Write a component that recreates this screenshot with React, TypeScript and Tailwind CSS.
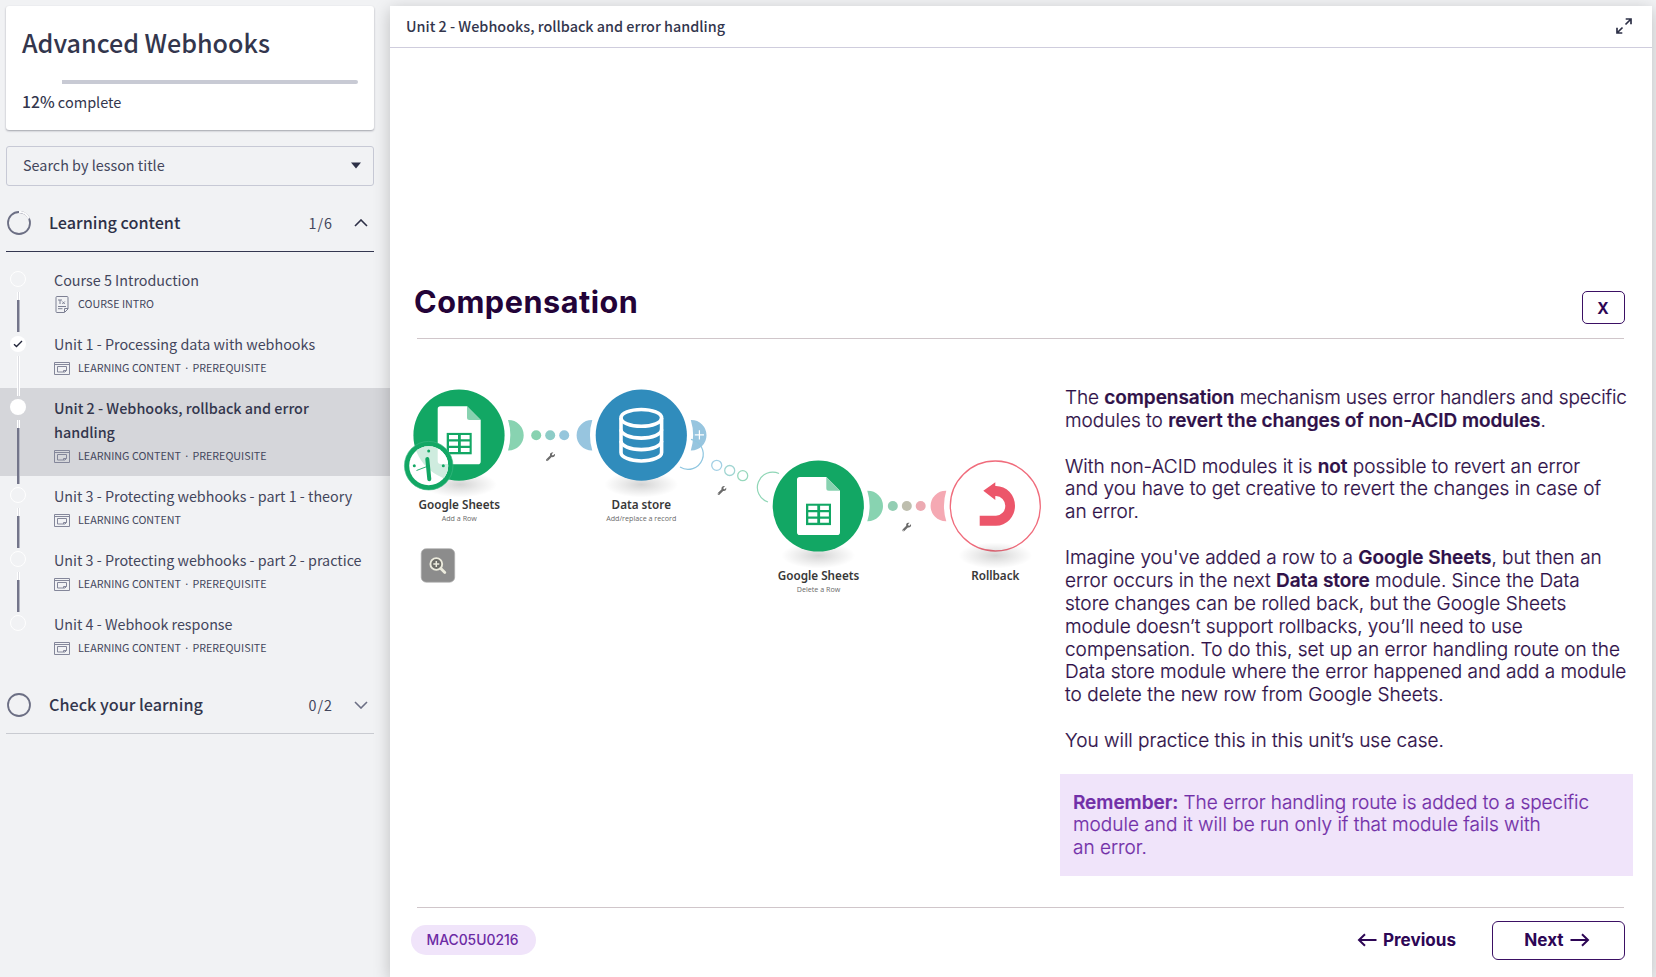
import type { ReactNode } from "react";
import { FaWrench } from "react-icons/fa";

type Lesson = {
  title: ReactNode;
  meta: string[];
  kind: "text" | "content";
  state: "open" | "done" | "active";
  line: "partial" | "white" | "none";
};

const lessons: Lesson[] = [
  { title: "Course 5 Introduction", meta: ["COURSE INTRO"], kind: "text", state: "open", line: "partial" },
  { title: "Unit 1 - Processing data with webhooks", meta: ["LEARNING CONTENT", "PREREQUISITE"], kind: "content", state: "done", line: "white" },
  {
    title: (
      <>
        Unit 2 - Webhooks, rollback and error
        <br />
        handling
      </>
    ),
    meta: ["LEARNING CONTENT", "PREREQUISITE"],
    kind: "content",
    state: "active",
    line: "partial",
  },
  { title: "Unit 3 - Protecting webhooks - part 1 - theory", meta: ["LEARNING CONTENT"], kind: "content", state: "open", line: "partial" },
  { title: "Unit 3 - Protecting webhooks - part 2 - practice", meta: ["LEARNING CONTENT", "PREREQUISITE"], kind: "content", state: "open", line: "partial" },
  { title: "Unit 4 - Webhook response", meta: ["LEARNING CONTENT", "PREREQUISITE"], kind: "content", state: "open", line: "none" },
];

function TextIcon() {
  return (
    <svg className="ml-px" width="14" height="17" viewBox="0 0 14 17" fill="none" stroke="#7d8093" strokeWidth="1">
      <path d="M2 .5h10a1 1 0 0 1 1 1v11.500l-3.500 3.500H2a1 1 0 0 1-1-1v-14a1 1 0 0 1 1-1zM9.500 16v-3.500H13" />
      <path d="M3 4h4M5 4v4M7.300 5.500l2.500 2.500M9.800 5.500L7.300 8M3 10.500h8M3 12.700h4.500" />
    </svg>
  );
}

function ContentIcon() {
  return (
    <svg width="16" height="13" viewBox="0 0 16 13" fill="none" stroke="#84879a" strokeWidth="1">
      <path d="M.5 .5h15v12H.5zM.5 2.500h15" />
      <path d="M3.500 4.500h9v4l-1.500 1.500H3.500zM9.500 10V8.500h3" />
    </svg>
  );
}

function Marker({ state }: { state: Lesson["state"] }) {
  if (state === "open") return <span className="size-4 rounded-full border border-white" />;
  return (
    <span className="flex size-4 items-center justify-center rounded-full bg-white">
      {state === "done" && (
        <svg width="10" height="8" viewBox="0 0 10 8" fill="none" stroke="#23263a" strokeWidth="1.400">
          <path d="M1 4.200l2.500 2.300L9 1" />
        </svg>
      )}
    </span>
  );
}

function LessonRow({ lesson }: { lesson: Lesson }) {
  const active = lesson.state === "active";
  const done = lesson.state === "done";
  return (
    <li className={active ? "relative flex bg-[#d5d6da] pt-2 pb-[10px]" : "relative flex pt-2 pb-[10px]"}>
      <div className={done ? "flex w-[54px] shrink-0 pt-[4px] pl-[10px]" : "flex w-[54px] shrink-0 pt-[3px] pl-[10px]"}>
        <Marker state={lesson.state} />
      </div>
      {lesson.line !== "none" && (
        <div className="absolute top-8 -bottom-2 left-[17px] z-10 flex w-[3px] flex-col">
          <span className={lesson.line === "white" ? "grow border-x border-white bg-[#dcdde2]" : "h-2 border-x border-white bg-[#dcdde2]"} />
          {lesson.line === "partial" && <span className="grow border-r border-[#b4b6c2] bg-[#73758a]" />}
        </div>
      )}
      <div className="text-[#43465c]">
        <div className={active ? "text-[14.380px] leading-6 font-medium whitespace-nowrap text-[#33364d]" : "text-[14.340px] leading-6 whitespace-nowrap"}>
          {lesson.title}
        </div>
        <div className="mt-[2px] flex h-5 items-center text-[10.720px] leading-5 whitespace-nowrap">
          <span className="flex w-6 items-center">{lesson.kind === "text" ? <TextIcon /> : <ContentIcon />}</span>
          {lesson.meta.map((m, i) => (
            <span key={m} className="whitespace-pre">
              {i > 0 && <span className="px-[2.700px]">·</span>}
              {m}
            </span>
          ))}
        </div>
      </div>
    </li>
  );
}

function SectionHeader({ label, count, open }: { label: string; count: string; open: boolean }) {
  return (
    <div
      className={
        open
          ? "mr-4 ml-[6px] flex h-[57px] items-center border-b border-[#343750] text-[#2d3047]"
          : "mr-4 ml-[6px] flex h-[57px] items-center border-b border-[#c9cbd1] text-[#33364d]"
      }
    >
      <svg className="ml-px" width="24" height="24" viewBox="0 0 24 24" fill="none">
        <circle cx="12" cy="12" r="11" stroke="#6c6f84" strokeWidth="1.800" />
        {open && <path d="M12 1a11 11 0 0 1 10 6.500" stroke="#fafafb" strokeWidth="2.200" />}
      </svg>
      <span className="ml-[18px] grow pb-[2px] text-[16.200px] leading-6 font-medium">{label}</span>
      <span className="mr-[21px] text-[14.290px] leading-6 tracking-[1px] text-[#43465c]">{count}</span>
      <svg className="mr-[6px]" width="14" height="8" viewBox="0 0 14 8" fill="none" stroke={open ? "#2d3047" : "#6c6f84"} strokeWidth="1.600">
        <path d={open ? "M1 7l6-6 6 6" : "M1 1l6 6 6-6"} />
      </svg>
    </div>
  );
}

function Sidebar() {
  return (
    <aside className="flex w-[390px] shrink-0 flex-col pt-[6px] font-['Noto_Sans_CJK_JP',sans-serif]">
      <div className="mr-4 ml-[6px] h-[124px] rounded-[3px] bg-white px-4 pt-[18px] shadow-[0_1px_2px_rgba(40,42,60,0.400)]">
        <h1 className="text-[25.100px] leading-9 font-medium whitespace-nowrap text-[#33364d]">Advanced Webhooks</h1>
        <div className="mt-5 flex h-1 rounded-full">
          <span className="w-10 bg-white" />
          <span className="grow rounded-r-[2px] bg-[#c8cad4]" />
        </div>
        <p className="mt-[6px] text-[14.500px] leading-6 text-[#33364d]">
          <span className="text-[15.700px] font-medium">12%</span> complete
        </p>
      </div>
      <div className="mt-4 mr-4 ml-[6px] flex h-10 items-center justify-between rounded-[3px] border border-[#c7c9d5] pr-[12px] pb-[2px] pl-4 text-[#43465c]">
        <span className="text-[14.380px] leading-6">Search by lesson title</span>
        <svg width="10" height="7" viewBox="0 0 10 7" fill="#2d3047">
          <path d="M0 .5h10L5 6.500z" />
        </svg>
      </div>
      <div className="mt-[9px]">
        <SectionHeader label="Learning content" count="1/6" open />
        <ul className="flex flex-col pt-2 pb-[9px]">
          {lessons.map((l, i) => (
            <LessonRow key={i} lesson={l} />
          ))}
        </ul>
        <SectionHeader label="Check your learning" count="0/2" open={false} />
      </div>
    </aside>
  );
}

function SheetNode({ x, y }: { x: number; y: number }) {
  return (
    <g transform={`translate(${x} ${y})`}>
      <circle r="45.600" fill="#12a764" />
      <path d="M-18.500-29H8L21.700-15.300V26.200a2.800 2.800 0 0 1-2.800 2.800h-37.400a2.800 2.800 0 0 1-2.800-2.800v-52.400a2.800 2.800 0 0 1 2.800-2.800z" fill="#fff" />
      <path d="M8-29L21.700-15.300H10.500A2.500 2.500 0 0 1 8-17.800z" fill="#87d2b0" />
      <rect x="-12.300" y="-2.300" width="25" height="21.400" fill="#12a764" />
      <path d="M-10-.2h9v4.200h-9zM1.800-.2h8.800v4.200H1.800zM-10 6.300h9v4.200h-9zM1.800 6.300h8.800v4.200H1.800zM-10 12.700h9v4h-9zM1.800 12.700h8.800v4H1.800z" fill="#fff" />
    </g>
  );
}

function Port({ x, y, side, color }: { x: number; y: number; side: "left" | "right"; color: string }) {
  return (
    <path
      transform={`translate(${x} ${y})${side === "left" ? " scale(-1 1)" : ""}`}
      d="M49-15.200H49.500A15.200 15.200 0 0 1 49.500 15.200H49A51.300 51.300 0 0 0 49-15.200z"
      fill={color}
    />
  );
}

function NodeLabel({ x, y, title, sub }: { x: number; y: number; title: string; sub?: string }) {
  return (
    <g textAnchor="middle" className="font-['Noto_Sans',sans-serif]">
      <text x={x} y={y} className="fill-[#383838] text-[11.700px] font-semibold">
        {title}
      </text>
      {sub && (
        <text x={x} y={y + 12.500} className="fill-[#6a6a6a] font-['Open_Sans',sans-serif] text-[7.170px]">
          {sub}
        </text>
      )}
    </g>
  );
}

function Scenario() {
  return (
    <svg className="block" width="650" height="220" viewBox="400 380 650 220" fill="none">
      <defs>
        <radialGradient id="floor">
          <stop offset="0" stopColor="#000" stopOpacity="0.170" />
          <stop offset="0.500" stopColor="#000" stopOpacity="0.080" />
          <stop offset="1" stopColor="#000" stopOpacity="0" />
        </radialGradient>
      </defs>
      <ellipse cx="460" cy="484.500" rx="37" ry="13" fill="url(#floor)" />
      <ellipse cx="641.300" cy="484.500" rx="37" ry="13" fill="url(#floor)" />
      <ellipse cx="818.300" cy="555.500" rx="37" ry="13" fill="url(#floor)" />

      <SheetNode x={459} y={435.200} />
      <Port x={459} y={435.200} side="right" color="#88d3b1" />
      <circle cx="428.700" cy="465.700" r="24.300" fill="#12a764" />
      <circle cx="428.700" cy="465.700" r="24.300" stroke="#3fb984" strokeWidth="0.600" />
      <clipPath id="dial">
        <circle cx="428.700" cy="465.700" r="19.500" />
      </clipPath>
      <g clipPath="url(#dial)">
        <rect x="404" y="441" width="50" height="50" fill="#fff" />
        <circle cx="459" cy="435" r="45.600" fill="#cfecdf" />
        <rect x="437.700" y="406" width="43" height="58" rx="3" fill="#fff" />
      </g>
      <path d="M427.300 459l2 20.300" stroke="#12a764" strokeWidth="4" strokeLinecap="round" />
      <path d="M427.500 466.300l-11 4.200" stroke="#12a764" strokeWidth="0.900" />
      <g fill="#12a764">
        <circle cx="428.700" cy="451" r="1.500" />
        <circle cx="414.300" cy="465.700" r="1.500" />
        <circle cx="443.300" cy="465.700" r="1.500" />
      </g>

      <circle cx="536.200" cy="435.200" r="5" fill="#88d2b0" />
      <circle cx="550.200" cy="435.200" r="5" fill="#8dccc7" />
      <circle cx="564.200" cy="435.200" r="5" fill="#95c6dc" />

      <circle cx="641.300" cy="435.200" r="45.600" fill="#308cbc" />
      <Port x={641.300} y={435.200} side="left" color="#97c5df" />
      <Port x={641.800} y={435.200} side="right" color="#97c5df" />
      <path d="M694.800 434.800h9.200M699.400 430.200v9.200" stroke="#fff" strokeWidth="1.200" />
      <path d="M691 439.300a15.200 15.200 0 1 1-11 27.800" stroke="#8fc6e0" strokeWidth="1.200" />
      <g stroke="#fff" strokeWidth="3.600">
        <ellipse cx="641.300" cy="417.900" rx="20.300" ry="8.400" />
        <path d="M621 417.900v34.500c0 4.700 9 8.600 20.300 8.600s20.300-3.900 20.300-8.600v-34.500" />
        <path d="M621 429.500c0 4.700 9 8.600 20.300 8.600s20.300-3.900 20.300-8.600M621 441c0 4.700 9 8.600 20.300 8.600s20.300-3.900 20.300-8.600" />
      </g>

      <circle cx="716.700" cy="465.300" r="5" stroke="#a3d0e5" strokeWidth="1.300" />
      <circle cx="729.700" cy="470.500" r="5" stroke="#a0d5d2" strokeWidth="1.300" />
      <circle cx="742.700" cy="475.700" r="5" stroke="#98d8bd" strokeWidth="1.300" />
      <path d="M779 473.500a15.300 15.300 0 1 0-11 28.500" stroke="#8fd6b6" strokeWidth="1.200" />

      <SheetNode x={818.300} y={506} />
      <Port x={818.300} y={506} side="right" color="#88d3b1" />
      <circle cx="892.800" cy="506" r="5" fill="#93ceb3" />
      <circle cx="906.800" cy="506" r="5" fill="#bebeae" />
      <circle cx="920.700" cy="506" r="5" fill="#ecaab2" />
      <Port x={995.300} y={506} side="left" color="#f5a9b3" />
      <circle cx="995.300" cy="506" r="45" fill="#fff" stroke="#f06c7c" strokeWidth="1.300" />
      <ellipse cx="995.300" cy="555.500" rx="37" ry="13" fill="url(#floor)" />
      <path
        d="M983.300 490.700L995.300 482.300V486H996A19 19.850 0 0 1 996 525.700H979.700V515.700H996A9.300 9.850 0 0 0 996 496H995.300V500z"
        fill="#ec566a"
      />

      <FaWrench x={546} y={452.200} size={9} color="#6b6b6b" />
      <FaWrench x={717.500} y={486} size={9} color="#6b6b6b" />
      <FaWrench x={902.200} y={522.500} size={9} color="#6b6b6b" />

      <NodeLabel x={459.300} y={508.700} title="Google Sheets" sub="Add a Row" />
      <NodeLabel x={641.300} y={508.700} title="Data store" sub="Add/replace a record" />
      <NodeLabel x={818.500} y={579.500} title="Google Sheets" sub="Delete a Row" />
      <NodeLabel x={995.300} y={579.500} title="Rollback" />

      <rect x="421.200" y="548.700" width="33.500" height="33.500" rx="5" fill="#8c8c8c" stroke="#b0b0b0" strokeWidth="0.700" />
      <circle cx="436.300" cy="564" r="5.900" fill="#6d6d68" stroke="#ecebdd" strokeWidth="1.900" />
      <path d="M440.800 568.500l4 4" stroke="#ecebdd" strokeWidth="2.800" strokeLinecap="round" />
      <path d="M433.300 564h6M436.300 561v6" stroke="#ecebdd" strokeWidth="1.500" />
    </svg>
  );
}

function Arrow({ dir }: { dir: "left" | "right" }) {
  return (
    <svg width="20" height="14" viewBox="0 0 20 14" fill="none" stroke="#2d0655" strokeWidth="2">
      <path d={dir === "left" ? "M19.500 7H2M8 1.200L2 7l6 5.800" : "M.5 7H18M12 1.200L18 7l-6 5.800"} />
    </svg>
  );
}

function Lines({ lines }: { lines: ReactNode[] }) {
  return (
    <p className="whitespace-nowrap">
      {lines.map((l, i) => (
        <span key={i} className="block">
          {l}
        </span>
      ))}
    </p>
  );
}

const B = ({ children }: { children: ReactNode }) => <strong className="font-semibold tracking-[-0.040px]">{children}</strong>;

export default function App() {
  return (
    <div className="flex h-[977px] w-[1656px] overflow-hidden bg-[#f1f2f4]">
      <Sidebar />
      <main className="relative z-20 mt-[6px] flex w-[1262px] flex-col bg-white font-['Inter',sans-serif] shadow-[0_4px_16px_rgba(0,0,0,0.220)]">
        <header className="flex h-[42px] items-center justify-between border-b border-[#cfcddd] pr-5 pb-[2px] pl-4 font-['Noto_Sans_CJK_JP',sans-serif] text-[#33364d]">
          <span className="text-[14.380px] leading-6 font-medium">Unit 2 - Webhooks, rollback and error handling</span>
          <svg width="16" height="16" viewBox="0 0 16 16" fill="none" stroke="#2d3047" strokeWidth="1.700">
            <path d="M9.500 6.500L15 1M9.700 1H15v5.300M6.500 9.500L1 15M6.300 15H1V9.700" />
          </svg>
        </header>

        <div className="mr-[28px] ml-[27px] flex h-[291px] items-end justify-between border-b border-[#d0c6ca]">
          <h2 className="-ml-[3px] pb-[16px] text-[30.600px] leading-[40px] font-bold tracking-[0.520px] text-[#230338]">Compensation</h2>
          <button className="-mr-px mb-[14px] flex h-[33px] w-[43px] items-center justify-center rounded-[5px] border-[1.500px] border-[#3b1064] pt-[2px] pr-px text-[15.500px] leading-5 font-bold text-[#2d0655]">
            X
          </button>
        </div>

        <div className="mr-[28px] ml-[27px] flex h-[569px] border-b border-[#d0c6ca]">
          <div className="-ml-[17px] w-[660px] pt-[41px]">
            <Scenario />
          </div>
          <div className="-mr-[9px] flex w-[573px] shrink-0 flex-col pt-[48px] text-[19px] font-light text-[#2f1149] [-webkit-text-stroke:0.200px]">
            <div className="flex flex-col gap-[22.870px] pl-[5px] leading-[22.870px]">
              <Lines
                lines={[
                  <span className="tracking-[-0.100px]">The <B>compensation</B> mechanism uses error handlers and specific</span>,
                  <>modules to <B>revert the changes of non-ACID modules</B>.</>,
                ]}
              />
              <Lines
                lines={[
                  <>With non-ACID modules it is <B>not</B> possible to revert an error</>,
                  <span className="tracking-[0.030px]">and you have to get creative to revert the changes in case of</span>,
                  "an error.",
                ]}
              />
              <Lines
                lines={[
                  <>Imagine you've added a row to a <B>Google Sheets</B>, but then an</>,
                  <>error occurs in the next <B>Data store</B> module. Since the Data</>,
                  <span className="tracking-[0.020px]">store changes can be rolled back, but the Google Sheets</span>,
                  <span className="tracking-[-0.050px]">module doesn’t support rollbacks, you’ll need to use</span>,
                  "compensation. To do this, set up an error handling route on the",
                  "Data store module where the error happened and add a module",
                  <span className="tracking-[0.040px]">to delete the new row from Google Sheets.</span>,
                ]}
              />
              <Lines lines={["You will practice this in this unit’s use case."]} />
            </div>
            <div className="mt-[21px] h-[102px] bg-[#f0e4fa] pt-[18px] pl-[13px] leading-[22.500px] text-[#722fa8]">
              <Lines
                lines={[
                  <span className="tracking-[-0.030px]"><B>Remember:</B> The error handling route is added to a specific</span>,
                  "module and it will be run only if that module fails with",
                  "an error.",
                ]}
              />
            </div>
          </div>
        </div>

        <footer className="mt-[13px] mr-[27px] ml-[21px] flex items-center text-[17.100px] leading-6 font-bold text-[#2d0655]">
          <span className="-mt-[2px] flex h-[30px] w-[125px] items-center justify-center rounded-full bg-[#f0e4fa] pr-[2px] text-[13.900px] font-medium text-[#6c2aa4]">
            MAC05U0216
          </span>
          <button className="-mt-[2px] ml-auto flex items-center gap-[5.500px]">
            <Arrow dir="left" />
            Previous
          </button>
          <button className="ml-[36px] flex h-[39px] w-[133px] items-center justify-center gap-[6px] rounded-[6px] border-[1.500px] border-[#3b1064] pr-[3px] pb-[2px]">
            Next
            <Arrow dir="right" />
          </button>
        </footer>
      </main>
    </div>
  );
}
